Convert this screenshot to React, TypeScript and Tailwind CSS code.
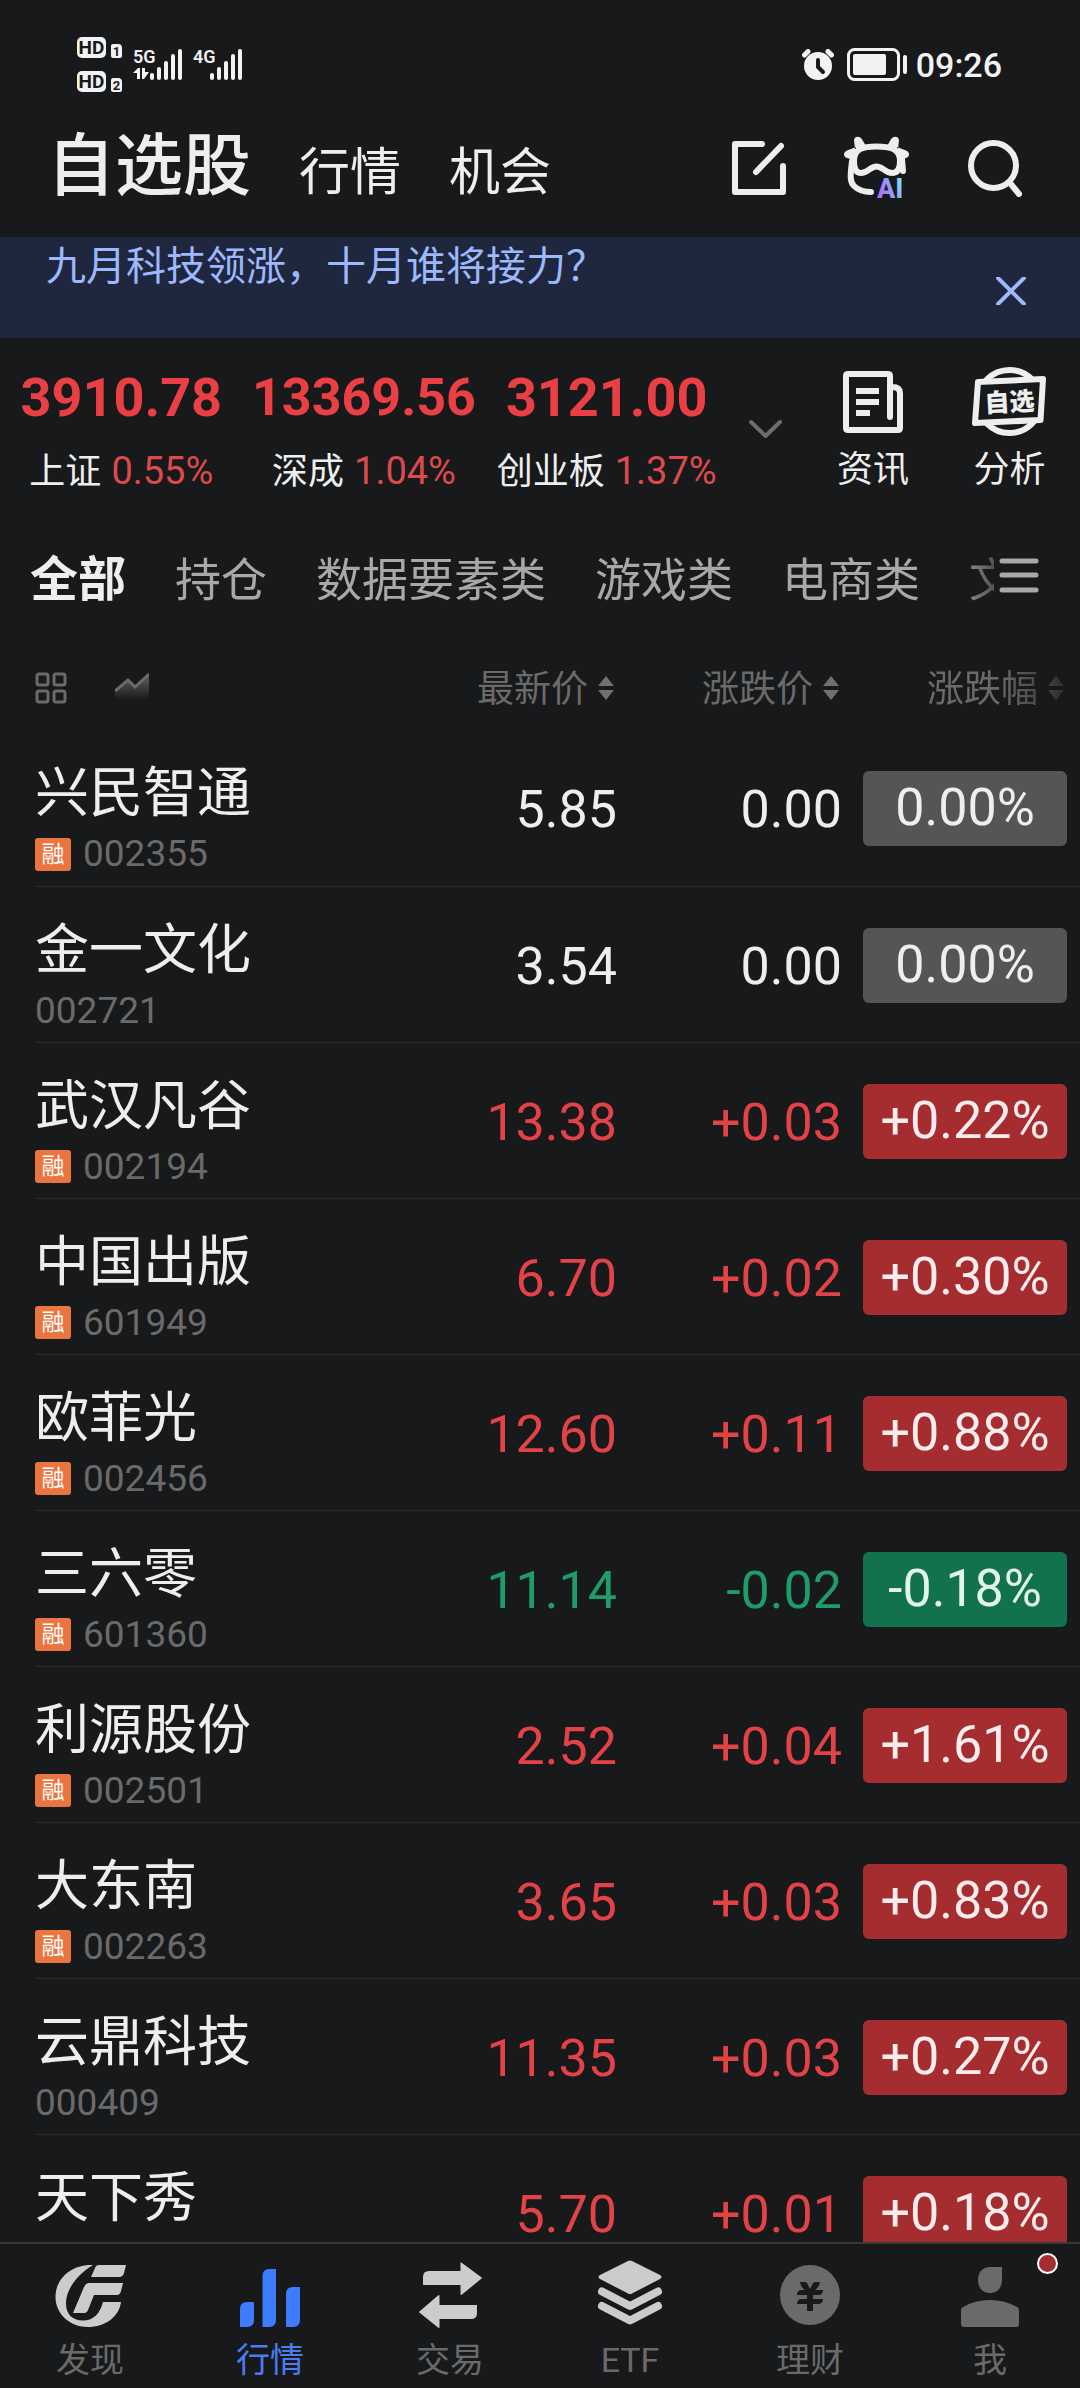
import type { ReactNode } from "react";

type Stock = {
  name: string;
  code?: string;
  margin?: boolean;
  price: string;
  change: string;
  percent: string;
};

const stocks: Stock[] = [
  { name: "兴民智通", code: "002355", margin: true, price: "5.85", change: "0.00", percent: "0.00%" },
  { name: "金一文化", code: "002721", price: "3.54", change: "0.00", percent: "0.00%" },
  { name: "武汉凡谷", code: "002194", margin: true, price: "13.38", change: "+0.03", percent: "+0.22%" },
  { name: "中国出版", code: "601949", margin: true, price: "6.70", change: "+0.02", percent: "+0.30%" },
  { name: "欧菲光", code: "002456", margin: true, price: "12.60", change: "+0.11", percent: "+0.88%" },
  { name: "三六零", code: "601360", margin: true, price: "11.14", change: "-0.02", percent: "-0.18%" },
  { name: "利源股份", code: "002501", margin: true, price: "2.52", change: "+0.04", percent: "+1.61%" },
  { name: "大东南", code: "002263", margin: true, price: "3.65", change: "+0.03", percent: "+0.83%" },
  { name: "云鼎科技", code: "000409", price: "11.35", change: "+0.03", percent: "+0.27%" },
  { name: "天下秀", price: "5.70", change: "+0.01", percent: "+0.18%" },
];

const indices = [
  { name: "上证", value: "3910.78", percent: "0.55%" },
  { name: "深成", value: "13369.56", percent: "1.04%" },
  { name: "创业板", value: "3121.00", percent: "1.37%" },
];

const groups = ["持仓", "数据要素类", "游戏类", "电商类", "文"];

function textColor(change: string) {
  if (change.startsWith("+")) return "text-[#e34247]";
  if (change.startsWith("-")) return "text-[#1f9d69]";
  return "text-[#eeeeee]";
}

function pillColor(change: string) {
  if (change.startsWith("+")) return "bg-[#a52d30] text-[#fdeced]";
  if (change.startsWith("-")) return "bg-[#12724e] text-[#e3f4ec]";
  return "bg-[#555555] text-[#eeeeee]";
}

function HdBadge({ sim }: { sim: string }) {
  return (
    <div className="flex items-end gap-[5px]">
      <span className="flex h-[21px] w-[29px] items-center justify-center rounded-[5px] bg-[#f2f2f2] text-[19px] leading-none font-bold text-[#17191a]">
        HD
      </span>
      <span className="flex h-[14px] w-[11px] items-center justify-center rounded-[2px] rounded-tr-[4px] bg-[#f2f2f2] text-[13px] leading-none font-bold text-[#17191a]">
        {sim}
      </span>
    </div>
  );
}

function Signal({ label, arrows }: { label: string; arrows?: boolean }) {
  return (
    <svg width="50" height="32" viewBox="0 0 50 32" fill="#f2f2f2">
      <text x="0" y="14" fontSize="18" fontWeight="600">{label}</text>
      {arrows && <path d="M0 24 5 19h2v11H4v-6zM9 19h3v4h4l-5 7H9z" />}
      <rect x="17" y="24" width="4" height="7" rx="2" />
      <rect x="24" y="18" width="4" height="13" rx="2" />
      <rect x="31" y="12" width="4" height="19" rx="2" />
      <rect x="38" y="5" width="4" height="26" rx="2" />
      <rect x="45" y="0" width="4" height="31" rx="2" />
    </svg>
  );
}

function StatusBar() {
  return (
    <div className="flex h-[129px] shrink-0 items-center justify-between pr-[78px] pl-[77px]">
      <div className="flex items-center">
        <div className="mr-[11px] flex flex-col gap-[13px]">
          <HdBadge sim="1" />
          <HdBadge sim="2" />
        </div>
        <div className="flex gap-[10px]">
          <Signal label="5G" arrows />
          <Signal label="4G" />
        </div>
      </div>
      <div className="flex items-center">
        <svg width="32" height="32" viewBox="0 0 32 32" fill="none">
          <circle cx="16" cy="17" r="14" fill="#f2f2f2" />
          <path d="M2.500 6 6 2.500M29.500 6 26 2.500" stroke="#f2f2f2" strokeWidth="5" strokeLinecap="round" />
          <path d="M16 11v7l5 5" stroke="#17191a" strokeWidth="4" strokeLinecap="round" strokeLinejoin="round" />
        </svg>
        <svg className="ml-[13px]" width="60" height="33" viewBox="0 0 60 33" fill="none">
          <rect x="1.500" y="1.500" width="50" height="30" rx="6" stroke="#f2f2f2" strokeWidth="3" />
          <rect x="6" y="6" width="33" height="21" rx="2" fill="#f2f2f2" />
          <rect x="56" y="7" width="4" height="19" rx="2" fill="#f2f2f2" />
        </svg>
        <span className="ml-[9px] text-[34px] leading-none font-medium text-[#f2f2f2]">09:26</span>
      </div>
    </div>
  );
}

function AssistantIcon() {
  return (
    <svg className="overflow-visible" width="66" height="62" viewBox="0 0 66 62" fill="none">
      <defs>
        <linearGradient id="ai" gradientUnits="userSpaceOnUse" x1="34" y1="60" x2="61" y2="50">
          <stop offset="0" stopColor="#b565f9" />
          <stop offset="0.6" stopColor="#8fa6f8" />
          <stop offset="1" stopColor="#7fe3f8" />
        </linearGradient>
      </defs>
      <path
        d="M11 12 10 3C11-2 17-1 19 4l3 5zM54 12l1-9C54-2 48-1 46 4l-3 5zM12 10 3 13.500C-1 15-1 20 3 21l9 3zM53 10l9 3.500C66 15 66 20 62 21l-9 3z"
        fill="#eeeeee"
      />
      <path
        d="M32.500 9.500C45 9.500 56 11 56 24c0 8-3 12-8 12-7 0-9-6.500-15.500-6.500S24 36 17 36c-5 0-7-4-7-12C10 11 20 9.500 32.500 9.500z"
        stroke="#eeeeee"
        strokeWidth="6"
      />
      <path
        d="M8 24C6 40 6 45 10 49c5 5 10 6 17 6M58 22l1 12"
        stroke="#eeeeee"
        strokeWidth="6"
        strokeLinecap="round"
      />
      <text x="33" y="61" fontSize="27" fontWeight="800" fill="url(#ai)">AI</text>
    </svg>
  );
}

function Header() {
  return (
    <header className="mb-[30px] flex h-[78px] shrink-0 items-center justify-between pr-[57px] pl-[47px] text-[#eeeeee]">
      <nav className="flex items-baseline gap-12 pt-[4px]">
        <button className="text-[68px] leading-[78px] font-medium">自选股</button>
        <button className="text-[51px] leading-[78px]">行情</button>
        <button className="text-[51px] leading-[78px]">机会</button>
      </nav>
      <div className="flex items-center gap-[58px]">
        <button aria-label="编辑">
          <svg width="54" height="54" viewBox="0 0 54 54" fill="none" stroke="currentColor" strokeWidth="6" strokeLinecap="round" strokeLinejoin="round">
            <path d="M30 3H3v48h48V25M49 5 24 31" />
          </svg>
        </button>
        <button aria-label="智能助手">
          <AssistantIcon />
        </button>
        <button aria-label="搜索">
          <svg width="55" height="57" viewBox="0 0 55 57" fill="none" stroke="currentColor" strokeWidth="6" strokeLinecap="round">
            <circle cx="25.500" cy="25.500" r="22.500" />
            <path d="m42 43 9 11" />
          </svg>
        </button>
      </div>
    </header>
  );
}

function Banner() {
  return (
    <div className="flex h-[101px] shrink-0 items-start justify-between bg-[#1e273e] pr-[54px] pl-[46px] text-[#9db8fc]">
      <p className="pt-[3px] text-[40px] leading-[54px]">九月科技领涨，十月谁将接力？</p>
      <button aria-label="关闭" className="mt-[40px]">
        <svg width="30" height="28" viewBox="0 0 30 28" fill="none" stroke="currentColor" strokeWidth="4" strokeLinecap="round">
          <path d="m2 1 26 26M28 1 2 27" />
        </svg>
      </button>
    </div>
  );
}

function Shortcut({ label, children }: { label: string; children: ReactNode }) {
  return (
    <button className="flex flex-col items-center text-[#eeeeee]">
      <span className="flex h-[78px] items-center">{children}</span>
      <span className="mt-[2px] text-[36px] leading-[54px]">{label}</span>
    </button>
  );
}

function Indices() {
  return (
    <section className="flex h-[162px] shrink-0 pr-[5px]">
      <div className="grid flex-1 grid-cols-3 pt-[33px]">
        {indices.map((item) => (
          <div key={item.name} className="flex flex-col items-center whitespace-nowrap">
            <span
              className={`leading-[54px] font-bold text-[#ea4045] ${item.value.length > 7 ? "text-[52px]" : "text-[54px]"}`}
            >
              {item.value}
            </span>
            <span className="mt-[19px] flex items-baseline gap-[10px] leading-[54px]">
              <span className="text-[36px] text-[#eeeeee]">{item.name}</span>
              <span className="text-[38px] text-[#dc4a4e]">{item.percent}</span>
            </span>
          </div>
        ))}
      </div>
      <button aria-label="展开指数" className="flex w-[74px] items-center justify-center pt-[19px]">
        <svg width="33" height="20" viewBox="0 0 33 20" fill="none" stroke="#6e6e6e" strokeWidth="4" strokeLinecap="round" strokeLinejoin="round">
          <path d="m2 3 14.500 14L31 3" />
        </svg>
      </button>
      <div className="grid grid-cols-[142px_131px] items-start pt-[25px]">
        <Shortcut label="资讯">
          <svg width="60" height="63" viewBox="0 0 60 63" fill="none" stroke="currentColor" strokeWidth="6" strokeLinejoin="round">
            <path d="M47 46V5q0-2-2-2H5Q3 3 3 5v52q0 2 2 2h50q2 0 2-2V22q0-6-8-6" strokeLinecap="round" />
            <path d="M13 20h23M13 31h23M13 42h14" />
          </svg>
        </Shortcut>
        <Shortcut label="分析">
          <svg width="75" height="70" viewBox="0 0 75 70" fill="none" stroke="currentColor" strokeWidth="6">
            <circle cx="37.500" cy="34.500" r="31.500" />
            <path d="m6 15 65-3-2.500 41L3 56z" fill="#17191a" strokeLinejoin="round" />
            <text x="37.500" y="44" fontSize="25" fontWeight="900" textAnchor="middle" fill="currentColor" stroke="none" transform="rotate(-3 37.500 35)">
              自选
            </text>
          </svg>
        </Shortcut>
      </div>
    </section>
  );
}

function Tabs() {
  return (
    <div className="flex h-[156px] shrink-0 items-center">
      <nav className="flex min-w-0 flex-1 items-center gap-[49px] overflow-hidden pt-[4px] pl-[30px] leading-[66px] whitespace-nowrap [mask-image:linear-gradient(to_right,black_96%,rgba(0,0,0,0.4))]">
        <button className="text-[48px] font-bold text-[#eeeeee]">全部</button>
        {groups.map((group) => (
          <button key={group} className="text-[46px] text-[#a8a8a8]">
            {group}
          </button>
        ))}
      </nav>
      <button aria-label="分组管理" className="w-[86px] pb-[4px] pl-[5px]">
        <svg width="40" height="36" viewBox="0 0 40 36" fill="none" stroke="#a8a8a8" strokeWidth="5" strokeLinecap="round">
          <path d="M3 3h34M3 17h34M3 32h34" />
        </svg>
      </button>
    </div>
  );
}

function SortButton({ label, faded }: { label: string; faded?: boolean }) {
  return (
    <button
      className={`ml-auto flex items-center gap-[10px] ${faded ? "[mask-image:linear-gradient(to_right,black_55%,rgba(0,0,0,0.25))]" : ""}`}
    >
      <span className="pt-[4px]">{label}</span>
      <svg width="16" height="24" viewBox="0 0 16 24" fill="#707070">
        <path d="m8 0 8 10H0zM8 24l8-10H0z" />
      </svg>
    </button>
  );
}

function StockTable() {
  return (
    <div className="min-h-0 flex-1 overflow-hidden pl-[35px]">
      <table className="w-full border-collapse">
        <thead>
          <tr className="h-[74px] text-[37px] leading-[50px] text-[#6a6a6a]">
            <th className="pb-[10px] font-normal">
              <div className="flex items-center gap-[48px]">
                <button aria-label="宫格视图">
                  <svg width="32" height="32" viewBox="0 0 32 32" fill="none" stroke="#6a6a6a" strokeWidth="3">
                    <rect x="2" y="2" width="11" height="11" rx="2" />
                    <rect x="19" y="2" width="11" height="11" rx="2" />
                    <rect x="2" y="19" width="11" height="11" rx="2" />
                    <rect x="19" y="19" width="11" height="11" rx="2" />
                  </svg>
                </button>
                <button aria-label="走势视图">
                  <svg width="34" height="32" viewBox="0 0 34 32" fill="none">
                    <defs>
                      <linearGradient id="trend" x1="0" y1="0" x2="0" y2="1">
                        <stop offset="0" stopColor="#6a6a6a" stopOpacity="0.9" />
                        <stop offset="1" stopColor="#6a6a6a" stopOpacity="0" />
                      </linearGradient>
                    </defs>
                    <path d="M0 19 13 8l7 7L34 2v26H0z" fill="url(#trend)" />
                    <path d="M0 19 13 8l7 7L34 2" stroke="#6a6a6a" strokeWidth="3" />
                  </svg>
                </button>
              </div>
            </th>
            <th className="w-[225px] pr-[3px] pb-[10px] font-normal">
              <SortButton label="最新价" />
            </th>
            <th className="w-[225px] pr-[3px] pb-[10px] font-normal">
              <SortButton label="涨跌价" />
            </th>
            <th className="w-[238px] pr-[16px] pb-[10px] font-normal">
              <SortButton label="涨跌幅" faded />
            </th>
          </tr>
        </thead>
        <tbody>
          {stocks.map((stock) => (
            <tr key={stock.name} className="h-[156px] border-b border-[#2a2c2d] text-right align-top text-[52px]">
              <td className="pt-[37px] text-left whitespace-nowrap">
                <div className="text-[54px] leading-[54px] text-[#eeeeee]">{stock.name}</div>
                {stock.code && (
                  <div className="mt-[13px] flex h-[40px] items-center gap-[12px]">
                    {stock.margin && (
                      <span className="flex h-[33px] w-[36px] items-center justify-center rounded-[3px] bg-[#e9763f] text-[23px] leading-none text-white">
                        融
                      </span>
                    )}
                    <span className="text-[37px] leading-[40px] text-[#6a6a6a]">{stock.code}</span>
                  </div>
                )}
              </td>
              <td className={`pt-[42px] leading-[75px] ${textColor(stock.change)}`}>{stock.price}</td>
              <td className={`pt-[42px] leading-[75px] ${textColor(stock.change)}`}>{stock.change}</td>
              <td className="pt-[41px] pr-[13px]">
                <span
                  className={`ml-auto flex h-[75px] w-[204px] justify-center rounded-[6px] leading-[73px] ${pillColor(stock.change)}`}
                >
                  {stock.percent}
                </span>
              </td>
            </tr>
          ))}
        </tbody>
      </table>
    </div>
  );
}

const navItems = [
  {
    label: "发现",
    icon: (
      <g fill="#cccccc">
        <path d="M39 4C18 3 1.500 17 1.500 36 1.500 53 16 66 34 66c17 0 31-10 33-25H49c-3 11-9 18.500-20 18.500S12 53 12 42C12 28 24 13 39 4z" />
        <path d="M37 16 41 7q1-3 4-3h27l-2 8q-1 4-5 4z" />
        <path d="m19 52 11-26q2-4 5-4h34l-2 8q-1 4-4 4H40l-6 15q-1 3-3 3z" />
      </g>
    ),
  },
  {
    label: "行情",
    active: true,
    icon: (
      <g fill="#3f7bff">
        <path d="M6 66V48q0-7 7-7h7v18q0 7-7 7z" />
        <path d="M28.500 66V15q0-7 7-7H42v51q0 7-7 7z" />
        <path d="M52 66V33q0-7 7-7h7v33q0 7-7 7z" />
      </g>
    ),
  },
  {
    label: "交易",
    icon: (
      <g fill="#cccccc">
        <path d="M9 24v-8q0-6 6-6h31.500V2q0-1.500 1.500 0l19 14q1.500 1 0 2L48 33.500q-1.500 1-1.500-.5v-9z" />
        <path d="M63 44v8q0 6-6 6H25.500v8q0 1.500-1.500.5L6 52q-2-1 0-2l18-15.500q1.500-1 1.500.5v9z" />
      </g>
    ),
  },
  {
    label: "ETF",
    icon: (
      <g>
        <path d="m34 0q2-1 4 0L66 14q3 2 0 4L38 32.500q-2 1-4 0L6 18q-3-2 0-4z" fill="#cccccc" />
        <path d="m8 30.500 28 14.500 28-14.500M8 45l28 14.500L64 45" fill="none" stroke="#cccccc" strokeWidth="8" strokeLinecap="round" strokeLinejoin="round" />
      </g>
    ),
  },
  {
    label: "理财",
    icon: (
      <g>
        <circle cx="36" cy="34" r="30" fill="#6a6a6a" />
        <path
          d="M26 21h5q2 0 3 3l2 4 2-4q1-3 3-3h5q-1 6-5 8h8q0 5-5 5h-5v4h10q0 5-5 5h-5v7h-6v-7h-10q0-5 5-5h5v-4H23q0-5 5-5h3q-4-2-5-8z"
          fill="#17191a"
        />
      </g>
    ),
  },
  {
    label: "我",
    dot: true,
    icon: (
      <g fill="#6a6a6a">
        <path d="M36 6h12v13c0 8-5 13-12 13s-12-5-12-13S29 6 36 6z" />
        <path d="M7 49q0-2 2-3 12-7 27-7t27 7q2 1 2 3v14q0 3-3 3H10q-3 0-3-3z" />
      </g>
    ),
  },
];

function BottomNav() {
  return (
    <nav className="grid h-[146px] shrink-0 grid-cols-6 border-t-2 border-[#38393b] pt-[17px]">
      {navItems.map((item) => (
        <button key={item.label} className="relative flex flex-col items-center">
          <svg className="overflow-visible" width="72" height="72" viewBox="0 0 72 72">
            {item.icon}
          </svg>
          <span className={`mt-[9px] text-[34px] leading-[36px] ${item.active ? "text-[#4a7df0]" : "text-[#6a6a6a]"}`}>
            {item.label}
          </span>
          {item.dot && (
            <span className="absolute -top-2 right-[22px] size-[21px] rounded-full border-2 border-white bg-[#a52d30]" />
          )}
        </button>
      ))}
    </nav>
  );
}

export default function App() {
  return (
    <div
      lang="zh-CN"
      className="flex h-screen flex-col overflow-hidden bg-[#17191a] font-['Roboto','Noto_Sans_CJK_SC',sans-serif]"
    >
      <StatusBar />
      <Header />
      <Banner />
      <Indices />
      <Tabs />
      <StockTable />
      <BottomNav />
    </div>
  );
}
